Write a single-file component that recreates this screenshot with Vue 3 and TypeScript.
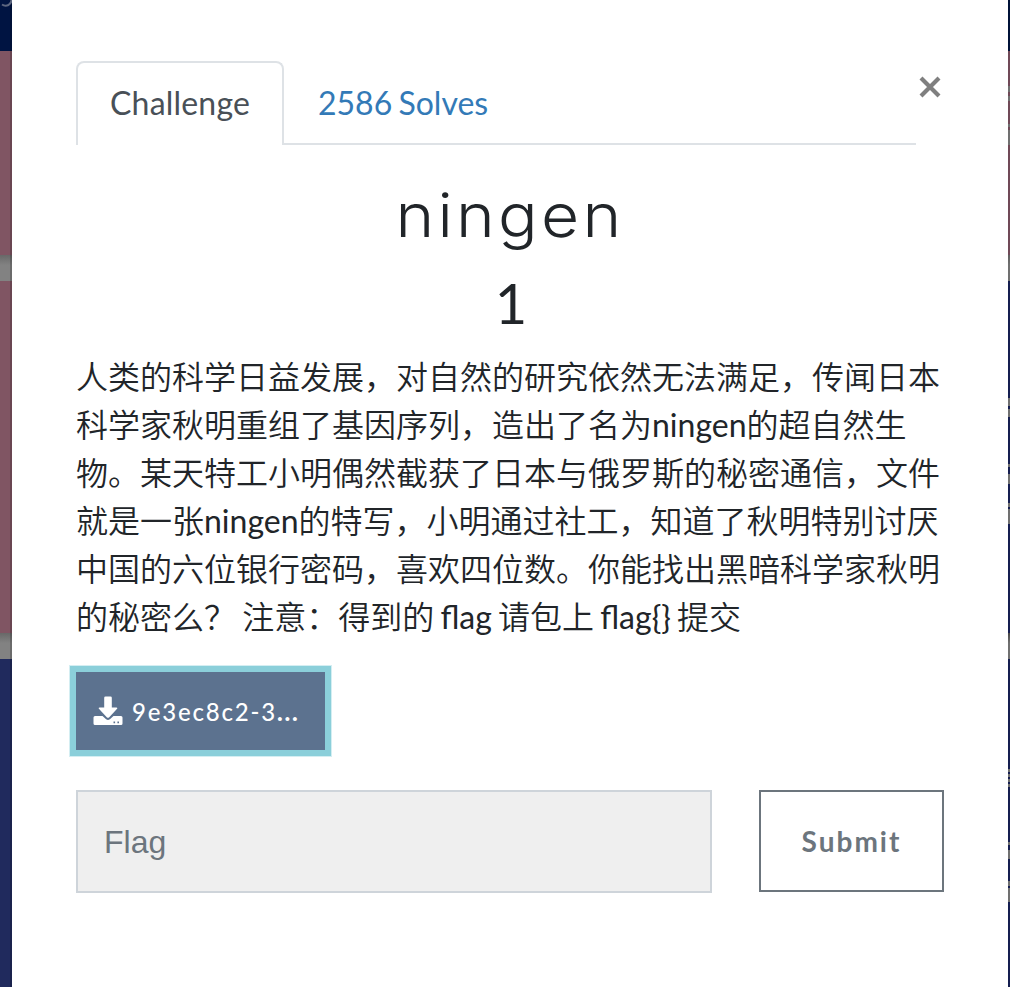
<script setup lang="ts">
import { ref } from 'vue'

interface Mark { top: number; height: number }
interface Run { text: string; latin: boolean }

const flag = ref('')

const lines: string[] = [
  '人类的科学日益发展，对自然的研究依然无法满足，传闻日本',
  '科学家秋明重组了基因序列，造出了名为ningen的超自然生',
  '物。某天特工小明偶然截获了日本与俄罗斯的秘密通信，文件',
  '就是一张ningen的特写，小明通过社工，知道了秋明特别讨厌',
  '中国的六位银行密码，喜欢四位数。你能找出黑暗科学家秋明',
  '的秘密么？ 注意：得到的 flag 请包上 flag{} 提交',
]

const runs = (line: string): Run[] =>
  (line.match(/[\x20-\x7e]+|[^\x20-\x7e]+/g) ?? []).map((text) => ({
    text,
    latin: /^[\x20-\x7e]/.test(text),
  }))

const marks: Mark[] = [
  [86, 6], [96, 5], [124, 3], [130, 15], [398, 8], [409, 8], [464, 3], [474, 10],
  [503, 4], [509, 15], [769, 3], [774, 3], [779, 3], [784, 3], [842, 3], [850, 9],
  [881, 5], [888, 14],
].map(([top, height]) => ({ top, height }))
</script>

<template>
  <div class="page">
    <div class="edge left">
      <svg class="clip" viewBox="0 0 12 8" width="12" height="8"><path d="M2 4.500Q5 6.500 8.500 5Q11.500 3 11.500 0" /></svg>
    </div>
    <main class="modal">
      <button class="close" type="button" aria-label="Close">
        <svg viewBox="0 0 22 22" width="22" height="22">
          <path d="M2 2 20 20M20 2 2 20" />
        </svg>
      </button>
      <nav class="tabs">
        <a class="tab active">Challenge</a>
        <a class="tab">2586 Solves</a>
      </nav>
      <h2 class="name">ningen</h2>
      <h3 class="value">1</h3>
      <p class="desc">
        <span v-for="line in lines" :key="line" class="line"><span v-for="(run, i) in runs(line)" :key="i" :class="run.latin ? 'latin' : 'han'">{{ run.text }}</span></span>
      </p>
      <a class="file">
        <svg viewBox="0 0 30 30" width="30" height="30">
          <path d="M12.5.5h5q1.300 0 1.300 1.300v9.700h4.700q1.500.2.6 1.300l-8.100 8.600q-1 .9-2 0L5.900 12.800q-.9-1.100.6-1.300h4.700V1.800Q11.200.5 12.500.5Z" />
          <path fill-rule="evenodd" d="M2 20h7.500l3.600 3.300q1.900 1.500 3.800 0L20.500 20H28q1.500 0 1.500 1.500v6q0 1.500-1.500 1.500H2Q.5 29 .5 27.500v-6Q.5 20 2 20ZM20.500 25.600v1.600h1.600v-1.600ZM24.400 25.600v1.600H26v-1.600Z" />
        </svg>
        <span class="file-name">9e3ec8c2-3<b>...</b></span>
      </a>
      <form class="answer" @submit.prevent>
        <input v-model="flag" type="text" placeholder="Flag" />
        <button class="submit" type="submit">Submit</button>
      </form>
    </main>
    <div class="edge right">
      <i v-for="m in marks" :key="m.top" class="mark" :style="{ top: m.top + 'px', height: m.height + 'px' }"></i>
    </div>
  </div>
</template>

<style>
body { margin: 0; overflow: hidden; }
</style>

<style scoped>
* { box-sizing: border-box; }
.page {
  display: flex;
  width: 1010px;
  height: 987px;
  overflow: hidden;
  color: #212529;
  font-family: Lato, "Noto Sans CJK SC", sans-serif;
  font-size: 32px;
  line-height: 48px;
  word-spacing: -2px;
}
.edge { position: relative; overflow: hidden; flex: none; }
.left {
  width: 12px;
  background:
    linear-gradient(90deg, transparent 10px, rgba(0, 0, 0, .18) 10px),
    linear-gradient(#001442 51px, #805563 51px 255px, #686868 255px, #828282 265px 281px, #805563 281px 633px, #686868 633px, #828282 643px 659px, #202a5d 659px);
}
.right {
  width: 2px;
  background: linear-gradient(#001238 51px, #704957 51px 255px, #5f5f5f 255px, #707070 265px 281px, #151e50 281px 633px, #454545 633px, #707070 643px 659px, #151e50 659px);
}
.mark { position: absolute; left: 0; width: 2px; background: #707070; }
.clip { position: absolute; left: 0; top: 0; }
.clip path { fill: none; stroke: #5d6780; stroke-width: 2; }
.modal {
  position: relative;
  width: 996px;
  padding: 61px 64px 0;
  background: #fff;
}
.close {
  position: absolute;
  left: 907px;
  top: 76px;
  display: flex;
  padding: 0;
  border: 0;
  background: none;
}
.close path { fill: none; stroke: #7f7f7f; stroke-width: 4.2; }
.tabs {
  display: flex;
  width: 840px;
  height: 84px;
  border-bottom: 2px solid #dee2e6;
}
.tab {
  height: 84px;
  padding: 16px 32px;
  border: 2px solid transparent;
  border-bottom: 0;
  color: #337ab7;
  white-space: nowrap;
}
.active {
  width: 208px;
  border-color: #dee2e6;
  border-radius: 8px 8px 0 0;
  background: #fff;
  color: #495057;
  letter-spacing: .2px;
}
.name {
  margin: 32px 0 0;
  font-family: Inter, sans-serif;
  font-size: 61px;
  font-weight: 300;
  line-height: 77px;
  letter-spacing: 3px;
  text-align: center;
  transform: scaleX(1.08);
}
.value {
  margin: 15px 0 0;
  padding-left: 2px;
  font-size: 56px;
  font-weight: 400;
  line-height: 67px;
  text-align: center;
}
.desc { margin: 17px 0 0; height: 288px; }
.line { display: block; height: 48px; white-space: pre; }
.han { font-family: "Noto Sans CJK SC DemiLight", "Noto Sans CJK SC", sans-serif; font-weight: 350; line-height: 1; }
.latin { line-height: 1; }
.file {
  display: flex;
  align-items: center;
  width: 249px;
  height: 78px;
  margin-top: 31px;
  padding-left: 17px;
  gap: 9px;
  background: #5c728f;
  box-shadow: 0 0 0 6px #8bcfda, 0 0 0 7px #d4eef2;
  color: #fff;
  font-size: 24px;
  letter-spacing: 1.8px;
  white-space: nowrap;
}
.file svg { fill: #fff; }
.file-name { padding-top: 2px; font-weight: 500; }
.file-name b { font-weight: 900; letter-spacing: 1.8px; }
.answer { display: flex; justify-content: space-between; align-items: flex-start; margin-top: 40px; }
.answer input {
  width: 636px;
  height: 103px;
  padding: 2px 26px 0;
  border: 2px solid #ced4da;
  border-radius: 0;
  outline: 0;
  background: #efefef;
  font: 32px "Liberation Sans", sans-serif;
}
.answer input::placeholder { color: #6c757d; opacity: 1; }
.submit {
  width: 185px;
  height: 102px;
  padding: 0;
  border: 2px solid #6c757d;
  background: #fff;
  color: #6c757d;
  font: 700 28px Lato, sans-serif;
  letter-spacing: 2px;
}
</style>
